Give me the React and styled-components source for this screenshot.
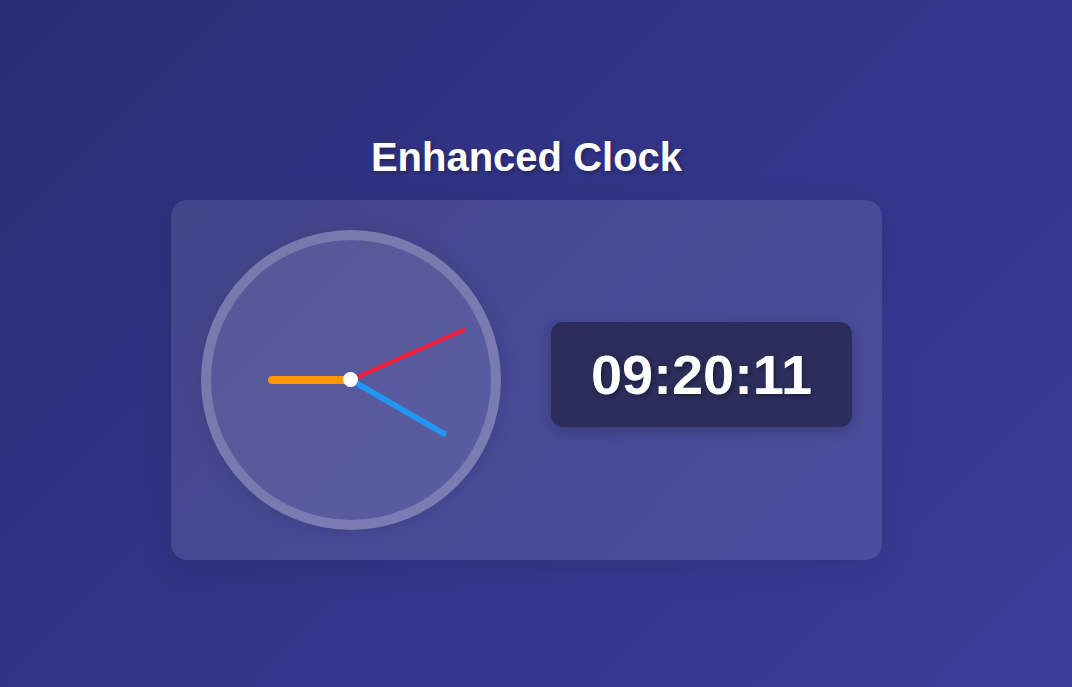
import React from 'react';
import styled, { createGlobalStyle } from 'styled-components';

const GlobalStyle = createGlobalStyle`
    html, body {
        margin:0;
        padding:0;
    }
    body {
        font-family:"Liberation Sans", Arial, sans-serif;
        background:linear-gradient(135deg, #2b2d76 0%, #33368a 55%, #3a3d98 100%);
        min-height:100vh;
    }
`

const time = { h: 9, m: 20, s: 11 };

const pad = (n) => String(n).padStart(2, '0');

const App = () => {
    const hourDeg = (time.h % 12) * 30;
    const minuteDeg = time.m * 6;
    const secondDeg = time.s * 6;

    return(
        <Page>
            <GlobalStyle />
            <Title>Enhanced Clock</Title>
            <Card>
                <Face>
                    <Hand $length={83} $width={8} $color="#ff9800" style={{ transform: `translateX(-50%) rotate(${hourDeg}deg)` }} />
                    <Hand $length={110} $width={6} $color="#2196f3" style={{ transform: `translateX(-50%) rotate(${minuteDeg}deg)` }} />
                    <Hand $length={125} $width={4} $color="#ff1a35" style={{ transform: `translateX(-50%) rotate(${secondDeg}deg)` }} />
                    <Pin />
                </Face>
                <Digital>
                    {pad(time.h)}:{pad(time.m)}:{pad(time.s)}
                </Digital>
            </Card>
        </Page>
    );
};

const Page = styled.div`
    min-height:100vh;
    display:flex;
    flex-direction:column;
    align-items:center;
    justify-content:center;
    padding:7px 19px 0 0;
    box-sizing:border-box;
`
const Title = styled.h1`
    margin:0 0 20px;
    color:white;
    font-size:40px;
    font-weight:700;
    text-shadow:2px 2px 4px rgba(0, 0, 0, 0.3);
`
const Card = styled.div`
    display:flex;
    align-items:center;
    gap:50px;
    padding:30px;
    background-color:rgba(255, 255, 255, 0.1);
    border-radius:16px;
    box-shadow:0 8px 32px rgba(0, 0, 0, 0.1);
`
const Face = styled.div`
    position:relative;
    width:280px;
    height:280px;
    border:10px solid rgba(255, 255, 255, 0.2);
    border-radius:50%;
    background-color:rgba(255, 255, 255, 0.1);
    box-shadow:0 0 20px rgba(0, 0, 0, 0.1);
`
const Hand = styled.div`
    position:absolute;
    bottom:50%;
    left:50%;
    width:${p => p.$width}px;
    height:${p => p.$length}px;
    background-color:${p => p.$color};
    border-radius:${p => p.$width / 2}px;
    transform-origin:50% 100%;
`
const Pin = styled.div`
    position:absolute;
    top:50%;
    left:50%;
    width:15px;
    height:15px;
    margin:-7.5px 0 0 -7.5px;
    border-radius:50%;
    background-color:white;
`
const Digital = styled.div`
    margin-bottom:10px;
    padding:20px 40px;
    background-color:rgba(0, 0, 0, 0.4);
    border-radius:12px;
    color:white;
    font-size:56px;
    font-weight:700;
    text-shadow:2px 2px 4px rgba(0, 0, 0, 0.3);
    box-shadow:0 4px 15px rgba(0, 0, 0, 0.2);
`

export default App;
